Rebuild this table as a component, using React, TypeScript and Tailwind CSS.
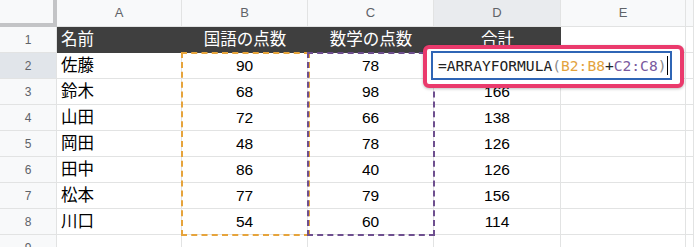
import React from "react";

const rows: [string, number, number, number][] = [
  ["佐藤", 90, 78, 168],
  ["鈴木", 68, 98, 166],
  ["山田", 72, 66, 138],
  ["岡田", 48, 78, 126],
  ["田中", 86, 40, 126],
  ["松本", 77, 79, 156],
  ["川口", 54, 60, 114],
];

const cell = "border-r border-b border-[#e2e3e3] flex items-center";

export default function App() {
  return (
    <div
      className="relative w-[694px] h-[247px] overflow-hidden bg-white text-[15.5px] text-black"
      style={{ fontFamily: '"Liberation Sans", "Noto Sans CJK JP", sans-serif' }}
    >
      <div className="grid grid-cols-[57px_125px_126px_126px_127px_125px_1fr] grid-rows-[27px_repeat(9,26px)]">
        {/* header row */}
        <div className="bg-[#f8f9fa] border-r-[4px] border-b-[4px] border-[#c3c4c6]" />
        {["A", "B", "C", "D", "E", ""].map((l, i) => (
          <div
            key={i}
            className={`${cell} justify-center text-[13px] text-[#5f6368] border-[#dcdde0] ${
              l === "D" ? "bg-[#e9ebee]" : "bg-[#f8f9fa]"
            }`}
          >
            {l}
          </div>
        ))}

        {/* row 1 */}
        <div className={`${cell} justify-center text-[12px] text-[#5f6368] bg-[#f8f9fa] border-[#dcdde0]`}>1</div>
        <div className="flex items-center bg-[#3f3f3f] text-white text-[16.5px] pl-[4px] border-b border-[#3f3f3f]">名前</div>
        <div className="flex items-center justify-center bg-[#3f3f3f] text-white text-[16.5px] border-b border-[#3f3f3f]">国語の点数</div>
        <div className="flex items-center justify-center bg-[#3f3f3f] text-white text-[16.5px] border-b border-[#3f3f3f]">数学の点数</div>
        <div className="flex items-center justify-center bg-[#3f3f3f] text-white text-[16.5px] border-b border-[#3f3f3f]">合計</div>
        <div className={cell} />
        <div className={cell} />

        {rows.map((r, i) => (
          <React.Fragment key={i}>
            <div
              className={`${cell} justify-center text-[12px] text-[#5f6368] border-[#dcdde0] ${
                i === 0 ? "bg-[#e1e5ea]" : "bg-[#f8f9fa]"
              }`}
            >
              {i + 2}
            </div>
            <div className={`${cell} pl-[4px] text-[16.5px]`}>{r[0]}</div>
            <div className={`${cell} justify-center`}>{r[1]}</div>
            <div className={`${cell} justify-center`}>{r[2]}</div>
            <div className={`${cell} justify-center`}>{r[3]}</div>
            <div className={cell} />
            <div className={cell} />
          </React.Fragment>
        ))}

        {/* row 9 */}
        <div className={`${cell} justify-center text-[12px] text-[#5f6368] bg-[#f8f9fa] border-[#dcdde0]`}>9</div>
        <div className={cell} />
        <div className={cell} />
        <div className={cell} />
        <div className={cell} />
        <div className={cell} />
        <div className={cell} />
      </div>

      {/* dashed range highlights */}
      <div className="absolute left-[181px] top-[52px] w-[129px] h-[184px] border-2 border-dashed border-[#e6a43c]" />
      <div className="absolute left-[307px] top-[52px] w-[128px] h-[184px] border-2 border-dashed border-[#6e4f8f]" />

      {/* formula editor */}
      <div className="absolute left-[423px] top-[45px] w-[261px] h-[43px] border-[4px] border-[#ea3a6c] rounded-[6px] bg-white shadow-[0_1px_3px_rgba(0,0,0,0.25)] pl-[4px] pt-[2px]">
        <div
          className="w-[241px] h-[29px] border-2 border-[#2f65b5] flex items-center pl-[5px] text-[14.6px] text-[#222]"
          style={{ fontFamily: '"DejaVu Sans Mono", "Liberation Mono", monospace' }}
        >
          <span>=ARRAYFORMULA</span>
          <span className="text-[#8a8a8a]">(</span>
          <span className="text-[#e3a33e]">B2:B8</span>
          <span>+</span>
          <span className="text-[#7a5a9e]">C2:C8</span>
          <span className="text-[#8a8a8a]">)</span>
          <span className="w-px h-[19px] bg-black" />
        </div>
      </div>
    </div>
  );
}
